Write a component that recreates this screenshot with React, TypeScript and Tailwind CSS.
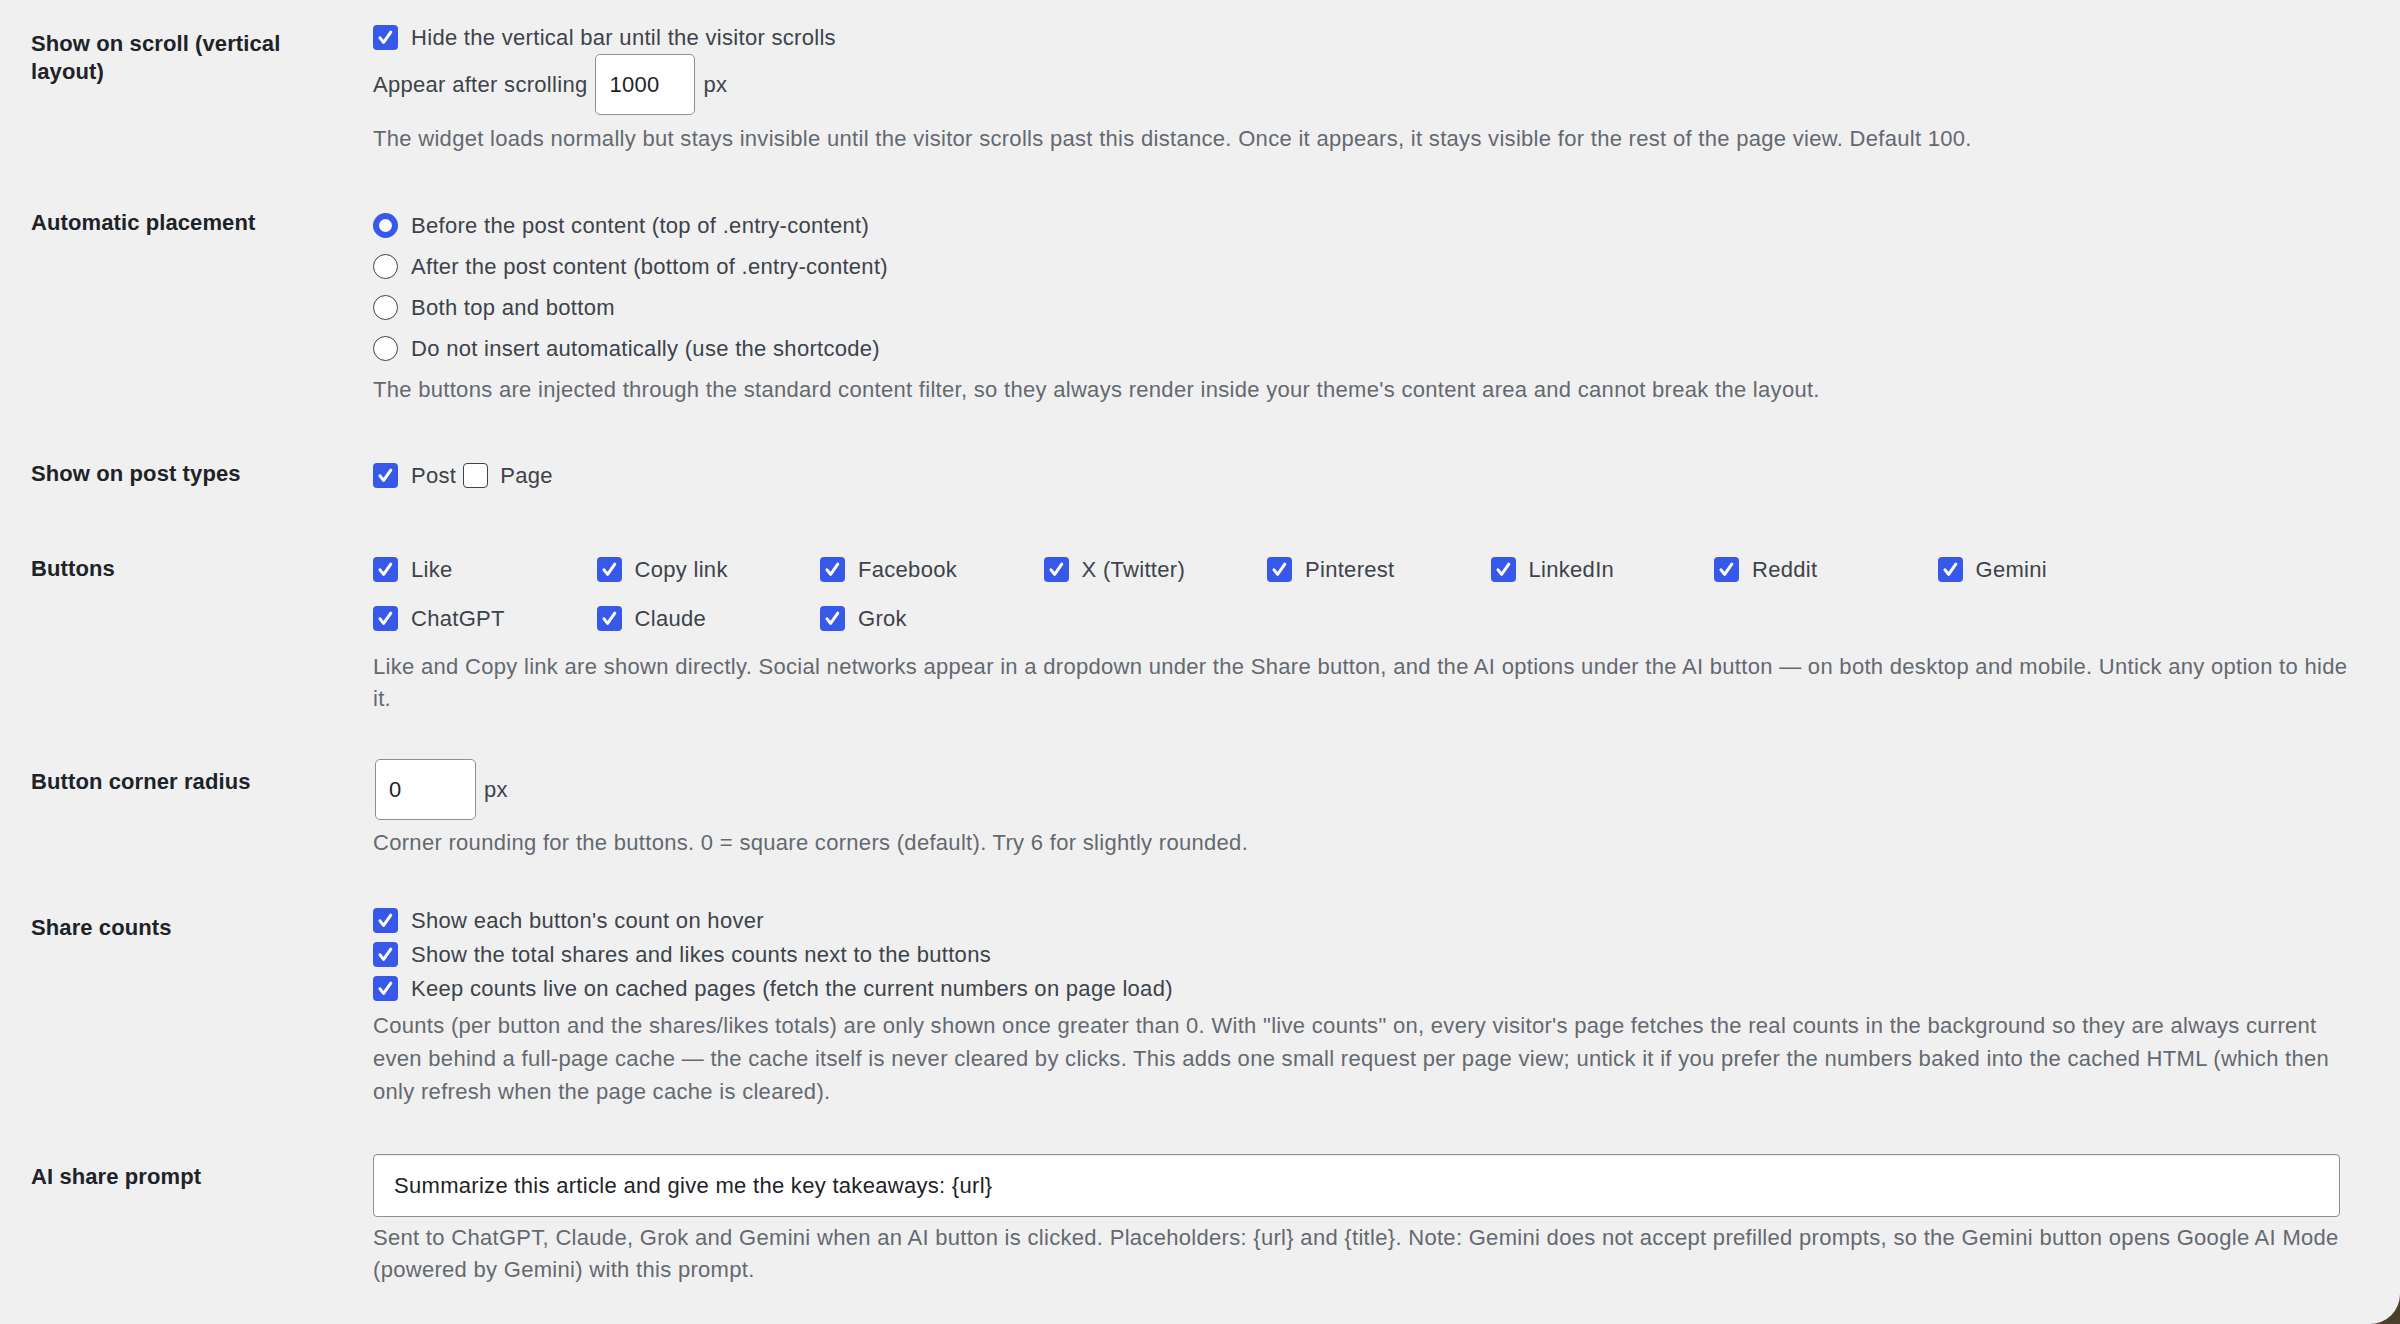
import React from "react";

function Check({ checked = true }: { checked?: boolean }) {
  if (!checked) {
    return <span className="block w-[25px] h-[25px] shrink-0 rounded-[4px] bg-white border-[1.5px] border-[#3c434a]" />;
  }
  return (
    <span className="flex w-[25px] h-[25px] shrink-0 rounded-[4px] bg-[#3858e9] items-center justify-center">
      <svg width="25" height="25" viewBox="0 0 25 25">
        <path d="M7 12.8 L10.6 17.4 L17.8 7.2" fill="none" stroke="#ffffff" strokeWidth="3" strokeLinecap="round" strokeLinejoin="round" />
      </svg>
    </span>
  );
}

function Radio({ checked = false }: { checked?: boolean }) {
  return checked ? (
    <span className="block w-[25px] h-[25px] shrink-0 rounded-full bg-white border-[6px] border-[#3858e9]" />
  ) : (
    <span className="block w-[25px] h-[25px] shrink-0 rounded-full bg-white border-[1.5px] border-[#3c434a]" />
  );
}

function Desc({ lines, lh = "leading-[32px]" }: { lines: string[]; lh?: string }) {
  return (
    <div className={`text-[#646970] ${lh}`}>
      {lines.map((l, i) => (
        <div key={i} className="whitespace-nowrap">
          {l}
        </div>
      ))}
    </div>
  );
}

export default function App() {
  const buttons1 = ["Like", "Copy link", "Facebook", "X (Twitter)", "Pinterest", "LinkedIn", "Reddit", "Gemini"];
  const buttons2 = ["ChatGPT", "Claude", "Grok"];
  const radios = [
    "Before the post content (top of .entry-content)",
    "After the post content (bottom of .entry-content)",
    "Both top and bottom",
    "Do not insert automatically (use the shortcode)",
  ];
  const counts = [
    "Show each button's count on hover",
    "Show the total shares and likes counts next to the buttons",
    "Keep counts live on cached pages (fetch the current numbers on page load)",
  ];
  const label = "w-[342px] shrink-0 pr-[52px] font-bold text-[#1d2327] leading-[28px] tracking-[0.1px]";

  return (
    <div className="relative w-[2400px] h-[1324px] overflow-hidden bg-[#f0f0f1] pl-[31px] pr-[58px] font-['Liberation_Sans',Arial,sans-serif] text-[22px] tracking-[0.3px] text-[#3c434a]">
      {/* Row 1 */}
      <div className="flex">
        <div className={`${label} pt-[30px]`}>Show on scroll (vertical layout)</div>
        <div className="flex-1 pt-[22px]">
          <div className="flex items-center gap-[13px] h-[30px]">
            <Check />
            <span>Hide the vertical bar until the visitor scrolls</span>
          </div>
          <div className="mt-[2px] flex items-center h-[61px]">
            <span>Appear after scrolling</span>
            <input
              readOnly
              value="1000"
              className="mx-[8px] w-[100px] h-[61px] rounded-[5px] border-[1.5px] border-[#8c8f94] bg-white px-[13px] text-[#1d2327] outline-none"
            />
            <span>px</span>
          </div>
          <div className="mt-[8px]">
            <Desc lines={["The widget loads normally but stays invisible until the visitor scrolls past this distance. Once it appears, it stays visible for the rest of the page view. Default 100."]} />
          </div>
        </div>
      </div>

      {/* Row 2 */}
      <div className="flex">
        <div className={`${label} pt-[54px]`}>Automatic placement</div>
        <div className="flex-1 pt-[50px]">
          {radios.map((r, i) => (
            <div key={r} className="flex items-center gap-[13px] h-[41px]">
              <Radio checked={i === 0} />
              <span>{r}</span>
            </div>
          ))}
          <div className="mt-[5px]">
            <Desc lines={["The buttons are injected through the standard content filter, so they always render inside your theme's content area and cannot break the layout."]} />
          </div>
        </div>
      </div>

      {/* Row 3 */}
      <div className="flex">
        <div className={`${label} pt-[54px]`}>Show on post types</div>
        <div className="flex-1 pt-[54px]">
          <div className="flex items-center h-[30px]">
            <Check />
            <span className="ml-[13px]">Post</span>
            <span className="ml-[7px] flex items-center">
              <Check checked={false} />
            </span>
            <span className="ml-[12px]">Page</span>
          </div>
        </div>
      </div>

      {/* Row 4 */}
      <div className="flex">
        <div className={`${label} pt-[65px]`}>Buttons</div>
        <div className="flex-1 pt-[55px]">
          <div className="grid grid-cols-[repeat(8,223.5px)]">
            {[...buttons1, ...buttons2].map((b) => (
              <div key={b} className="flex items-center gap-[13px] h-[49px]">
                <Check />
                <span>{b}</span>
              </div>
            ))}
          </div>
          <div className="mt-[8px]">
            <Desc
              lines={[
                "Like and Copy link are shown directly. Social networks appear in a dropdown under the Share button, and the AI options under the AI button \u2014 on both desktop and mobile. Untick any option to hide",
                "it.",
              ]}
            />
          </div>
        </div>
      </div>

      {/* Row 5 */}
      <div className="flex">
        <div className={`${label} pt-[53px]`}>Button corner radius</div>
        <div className="flex-1 pt-[44px]">
          <div className="flex items-center h-[61px]">
            <input
              readOnly
              value="0"
              className="ml-[2px] mr-[8px] w-[101px] h-[61px] rounded-[5px] border-[1.5px] border-[#8c8f94] bg-white px-[13px] text-[#1d2327] outline-none"
            />
            <span>px</span>
          </div>
          <div className="mt-[7px]">
            <Desc lines={["Corner rounding for the buttons. 0 = square corners (default). Try 6 for slightly rounded."]} />
          </div>
        </div>
      </div>

      {/* Row 6 */}
      <div className="flex">
        <div className={`${label} pt-[55px]`}>Share counts</div>
        <div className="flex-1 pt-[44px]">
          {counts.map((c) => (
            <div key={c} className="flex items-center gap-[13px] h-[34px]">
              <Check />
              <span>{c}</span>
            </div>
          ))}
          <div className="mt-[4px]">
            <Desc
              lh="leading-[33px]"
              lines={[
                "Counts (per button and the shares/likes totals) are only shown once greater than 0. With \"live counts\" on, every visitor's page fetches the real counts in the background so they are always current",
                "even behind a full-page cache \u2014 the cache itself is never cleared by clicks. This adds one small request per page view; untick it if you prefer the numbers baked into the cached HTML (which then",
                "only refresh when the page cache is cleared).",
              ]}
            />
          </div>
        </div>
      </div>

      {/* Row 7 */}
      <div className="flex">
        <div className={`${label} pt-[55px]`}>AI share prompt</div>
        <div className="flex-1 pt-[46px]">
          <input
            readOnly
            value="Summarize this article and give me the key takeaways: {url}"
            className="block w-[1967px] h-[63px] rounded-[4px] border-[1.5px] border-[#8c8f94] bg-white px-[20px] text-[#1d2327] outline-none shadow-[inset_0_1px_1px_rgba(0,0,0,0.08)]"
          />
          <div className="mt-[5px]">
            <Desc
              lines={[
                "Sent to ChatGPT, Claude, Grok and Gemini when an AI button is clicked. Placeholders: {url} and {title}. Note: Gemini does not accept prefilled prompts, so the Gemini button opens Google AI Mode",
                "(powered by Gemini) with this prompt.",
              ]}
            />
          </div>
        </div>
      </div>

      {/* window corner */}
      <div className="absolute right-0 bottom-0 w-[30px] h-[30px] bg-[#4a3f2a]">
        <div className="w-full h-full bg-[#f0f0f1] rounded-br-[30px]" />
      </div>
    </div>
  );
}
